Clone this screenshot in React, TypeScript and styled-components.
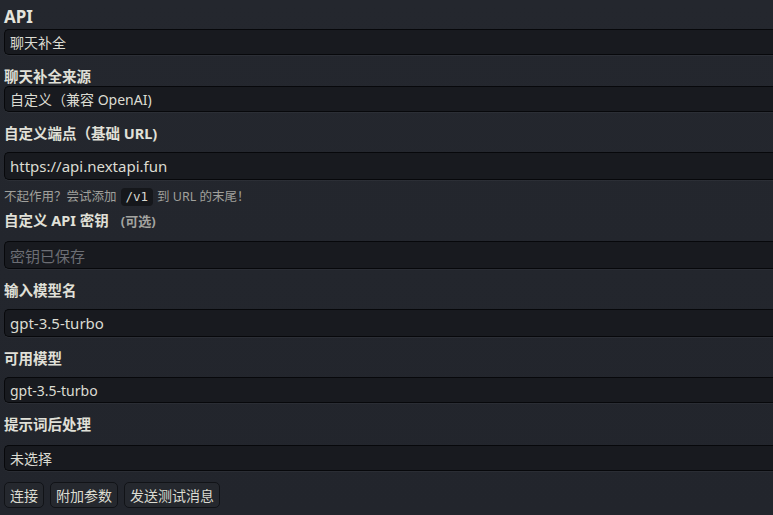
import React from 'react';
import styled, { createGlobalStyle } from 'styled-components';

const GlobalStyle = createGlobalStyle`
  html, body {
    margin: 0;
    padding: 0;
    background: #23262d;
    overflow: hidden;
  }
  body {
    font-family: "Noto Sans", "Noto Sans CJK SC", sans-serif;
    color: #dcdcd2;
  }
`;

const Panel = styled.div`
  width: 800px;
  height: 515px;
  padding: 4px 0 0 4px;
  box-sizing: border-box;
  display: flex;
  flex-direction: column;
  background: linear-gradient(180deg, #24272e 0%, #22252c 100%);
`;

const Heading = styled.h3`
  margin: 0;
  height: 25px;
  line-height: 25px;
  font-size: 17px;
  font-weight: 700;
  color: #e4e4dc;
`;

const Label = styled.h4<{ $top?: number; $bottom?: number }>`
  margin: ${(p) => p.$top ?? 11}px 0 ${(p) => p.$bottom ?? 9}px;
  height: 20px;
  line-height: 20px;
  font-size: 14.5px;
  font-weight: 700;
  color: #e0e0d8;
  display: flex;
  align-items: baseline;
`;

const Optional = styled.span`
  margin-left: 12px;
  font-size: 13px;
  font-weight: 700;
  color: #a4a4a0;
`;

const Field = styled.div<{ $input?: boolean; $muted?: boolean }>`
  height: ${(p) => (p.$input ? 28 : 26)}px;
  box-sizing: border-box;
  display: flex;
  align-items: center;
  padding-left: 5px;
  background: #181a1f;
  border: 1px solid #07080b;
  border-right: none;
  border-radius: 5px 0 0 5px;
  box-shadow: 0 1px 0 rgba(255, 255, 255, 0.04);
  font-size: ${(p) => (p.$input ? 15 : 14)}px;
  color: ${(p) => (p.$muted ? '#6c6e74' : '#dcdcd2')};
  white-space: nowrap;
`;

const Hint = styled.div`
  margin-top: 7px;
  height: 20px;
  line-height: 20px;
  font-size: 12.5px;
  color: #a0a09c;
  display: flex;
  align-items: center;
  gap: 4px;
`;

const Code = styled.code`
  font-family: "DejaVu Sans Mono", "Liberation Mono", monospace;
  font-size: 12.5px;
  line-height: 18px;
  padding: 0 5px;
  border-radius: 4px;
  background: #15171b;
  color: #d8d8d0;
`;

const ButtonRow = styled.div`
  display: flex;
  gap: 6px;
  margin-top: 11px;
`;

const Button = styled.div`
  height: 26px;
  padding: 0 5px;
  box-sizing: border-box;
  display: flex;
  align-items: center;
  background: #25282e;
  border: 1px solid #111317;
  border-radius: 5px;
  font-size: 14px;
  color: #dcdcd2;
`;

const App = () => {
  return (
    <>
      <GlobalStyle />
      <Panel>
        <Heading>API</Heading>
        <Field>聊天补全</Field>
        <Label $top={11} $bottom={0}>聊天补全来源</Label>
        <Field>自定义（兼容 OpenAI)</Field>
        <Label>自定义端点（基础 URL)</Label>
        <Field $input>https://api.nextapi.fun</Field>
        <Hint>
          不起作用？尝试添加 <Code>/v1</Code> 到 URL 的末尾！
        </Hint>
        <Label $top={3} $bottom={11}>
          自定义 API 密钥<Optional>(可选)</Optional>
        </Label>
        <Field $input $muted>密钥已保存</Field>
        <Label>输入模型名</Label>
        <Field $input>gpt-3.5-turbo</Field>
        <Label>可用模型</Label>
        <Field>gpt-3.5-turbo</Field>
        <Label $bottom={11}>提示词后处理</Label>
        <Field>未选择</Field>
        <ButtonRow>
          <Button>连接</Button>
          <Button>附加参数</Button>
          <Button>发送测试消息</Button>
        </ButtonRow>
      </Panel>
    </>
  );
};

export default App;
